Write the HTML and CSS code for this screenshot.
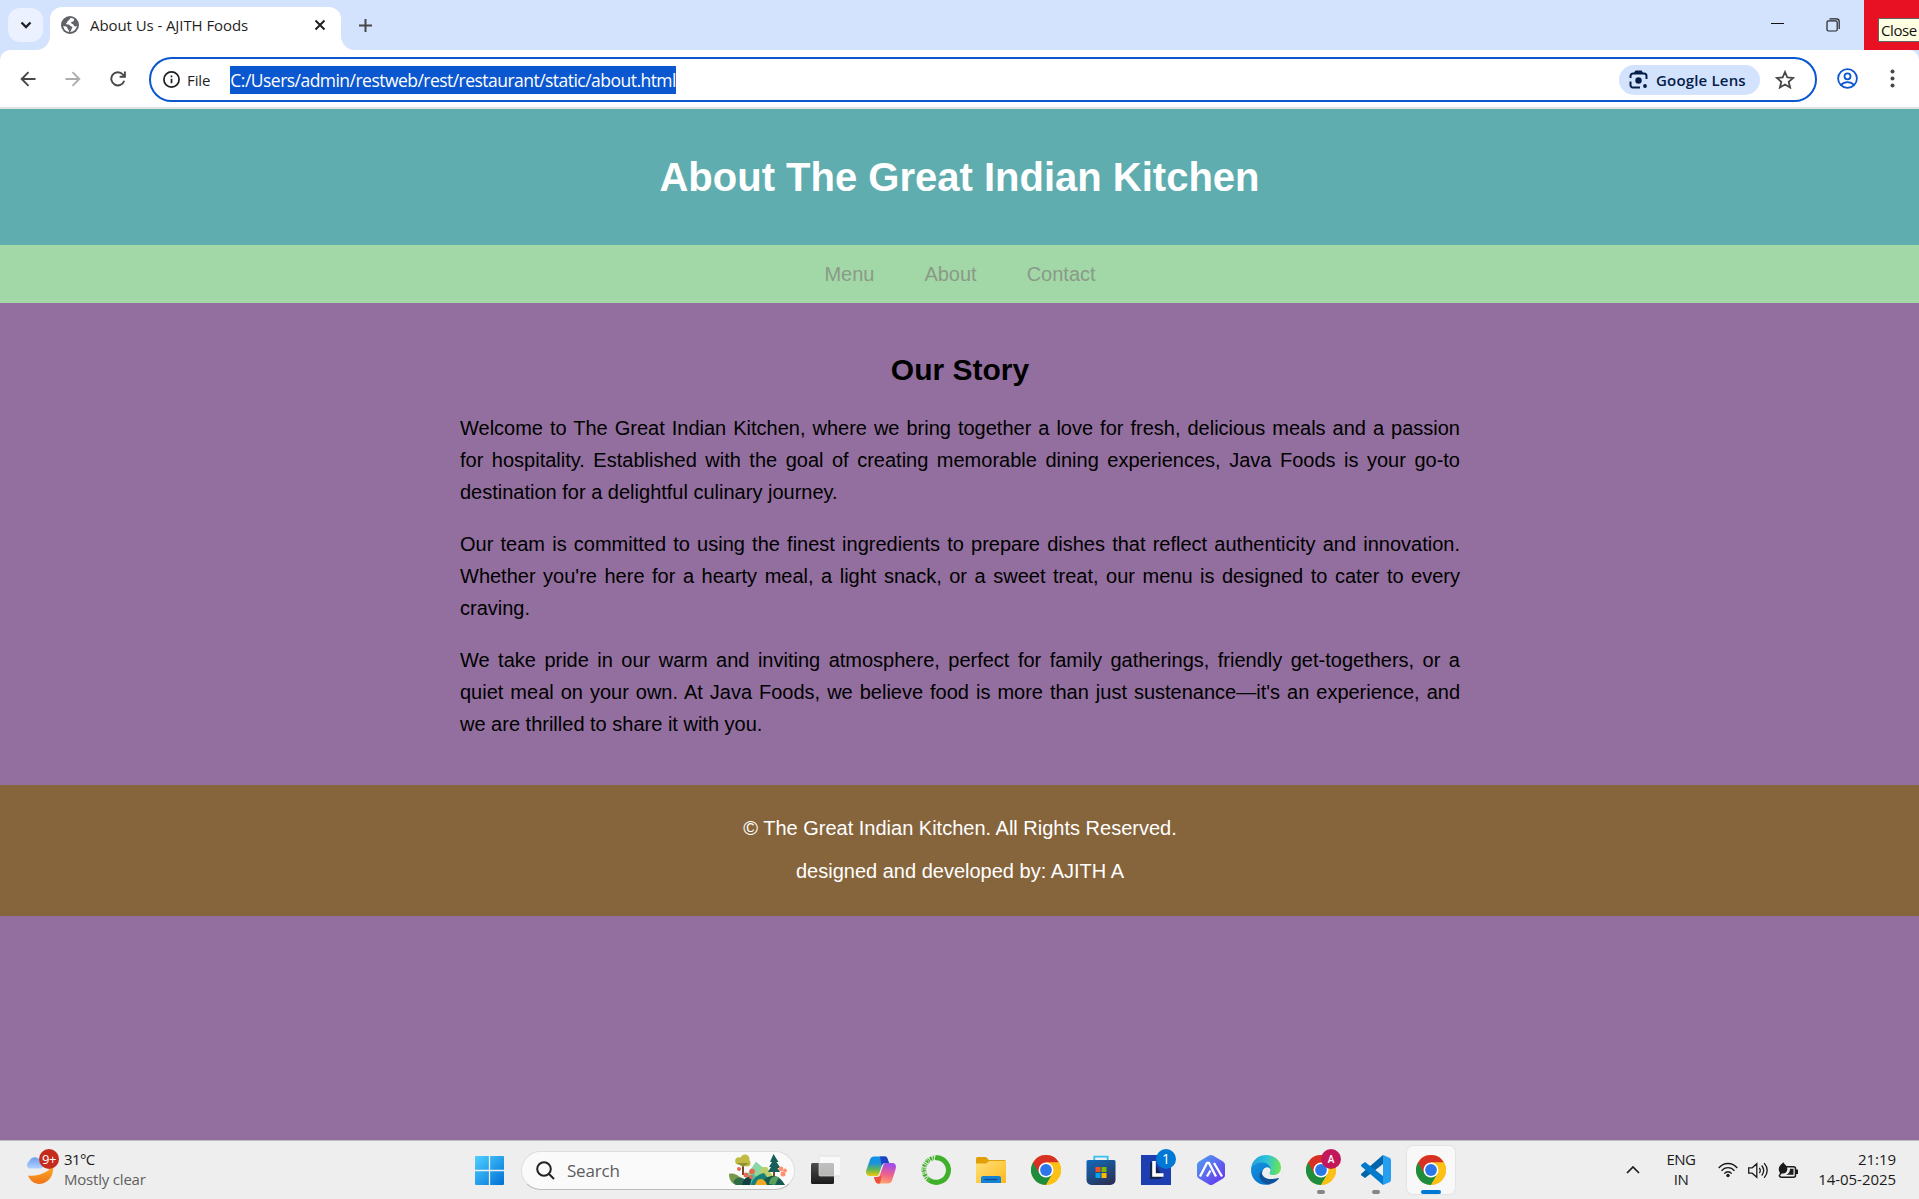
FILE: index.html
```html
<!DOCTYPE html>
<html lang="en">
<head>
<meta charset="utf-8">
<title>About Us - AJITH Foods</title>
<link rel="stylesheet" href="styles.css">
</head>
<body>
<svg class="defs" aria-hidden="true">
  <defs>
    <symbol id="chrome" viewBox="0 0 30 30">
      <circle cx="15" cy="15" r="15" fill="#fbc116"/>
      <path d="M15 15 2 7.5A15 15 0 0 0 15 30l6.5-11.3z" fill="#1e8e3e"/>
      <path d="M2 7.5A15 15 0 0 1 28 7.5H15l-6.500 11.250z" fill="#d93025"/>
      <path d="M15 7.500H28A15 15 0 0 1 15 30l6.500-11.250z" fill="#fbc116"/>
      <circle cx="15" cy="15" r="7.500" fill="#fff"/>
      <circle cx="15" cy="15" r="5.900" fill="#2b77ea"/>
    </symbol>
    <linearGradient id="win" x1="0" y1="0" x2="1" y2="1"><stop offset="0" stop-color="#4fd0ff"/><stop offset="1" stop-color="#0070d6"/></linearGradient>
    <linearGradient id="moon" x1="0" y1="0" x2="0" y2="1"><stop offset="0" stop-color="#ffb52c"/><stop offset="1" stop-color="#ef7417"/></linearGradient>
    <linearGradient id="cloud" x1="0" y1="0" x2="0" y2="1"><stop offset="0" stop-color="#6e9df0"/><stop offset="1" stop-color="#b3d2ff"/></linearGradient>
    <linearGradient id="dark" x1="0" y1="0" x2="0" y2="1"><stop offset="0" stop-color="#4d4d4b"/><stop offset="1" stop-color="#1b1b1b"/></linearGradient>
    <linearGradient id="cpa" x1="0" y1="0" x2="0" y2="1"><stop offset="0" stop-color="#128fe8"/><stop offset=".35" stop-color="#1c93d8"/><stop offset=".7" stop-color="#6cb84a"/><stop offset="1" stop-color="#f1c80c"/></linearGradient>
    <linearGradient id="cpb" x1=".4" y1="0" x2=".2" y2="1"><stop offset="0" stop-color="#a04ee8"/><stop offset=".5" stop-color="#f0608c"/><stop offset="1" stop-color="#ffab68"/></linearGradient>
    <linearGradient id="folder" x1="0" y1="0" x2="1" y2="1"><stop offset="0" stop-color="#ffe07a"/><stop offset="1" stop-color="#fcb91c"/></linearGradient>
    <linearGradient id="store" x1="0" y1="0" x2=".6" y2="1"><stop offset="0" stop-color="#0f6cbd"/><stop offset="1" stop-color="#29335c"/></linearGradient>
    <linearGradient id="hex" x1="0" y1="0" x2="1" y2="1"><stop offset="0" stop-color="#4ea3ee"/><stop offset="1" stop-color="#6a2cf0"/></linearGradient>
    <linearGradient id="edgetop" x1="0" y1=".3" x2="1" y2=".4"><stop offset="0" stop-color="#249fd8"/><stop offset=".5" stop-color="#2dc1dc"/><stop offset="1" stop-color="#6be552"/></linearGradient>
    <linearGradient id="edgemid" x1="0" y1="0" x2=".6" y2="1"><stop offset="0" stop-color="#1593df"/><stop offset="1" stop-color="#0674cd"/></linearGradient>
  </defs>
</svg>

<header class="browser">
  <div class="tabstrip">
    <button class="tab-search" aria-label="Search tabs"><svg width="12" height="8" viewBox="0 0 12 8"><path d="M1.500 1.500 6 6l4.500-4.500" fill="none" stroke="#202124" stroke-width="2.300"/></svg></button>
    <div class="tab">
      <svg class="foot foot-left" width="14" height="14" viewBox="0 0 14 14"><path d="M14 0v14H0A14 14 0 0 0 14 0" fill="#fff"/></svg>
      <svg class="globe" width="18" height="18" viewBox="0 0 18 18"><circle cx="9" cy="9" r="9" fill="#5f6368"/><path d="M10 2c-1.500 0-1 1.800-2.500 2.400C6 5 6.800 6.500 5.200 7.200 4.600 8 6 8.600 7.500 8.500c1.700 0 1.200 1.800 3 2 1.500.2 1 1.400.2 2.300-.7.900-.6 2.600-1.700 3.200a7 7 0 0 0 6.900-6.200c-1.400 1-3 .7-3.300-.8-.3-1.300-2.300-.8-2.500-2.200-.1-1.300 1.700-.9 2.600-1.700.7-.7.500-1.700-.1-2.300C11.800 2.300 11 2 10 2zM2.200 9.800A7 7 0 0 0 8 15.900c.2-1-.1-2-.9-2.500-.8-.6-.3-1.600-1.200-2.400C5 10.200 3.600 10.600 2.200 9.800z" fill="#fff"/></svg>
      <span class="tab-title">About Us - AJITH Foods</span>
      <svg class="tab-close" width="12" height="12" viewBox="0 0 12 12"><path d="m1.500 1.500 9 9m0-9-9 9" stroke="#202124" stroke-width="2"/></svg>
      <svg class="foot foot-right" width="14" height="14" viewBox="0 0 14 14"><path d="M0 0v14h14A14 14 0 0 1 0 0" fill="#fff"/></svg>
    </div>
    <svg class="new-tab" width="13" height="13" viewBox="0 0 13 13"><path d="M6.500 0v13M0 6.500h13" stroke="#474747" stroke-width="2"/></svg>
    <div class="window-controls">
      <div class="control minimize"><svg width="13" height="13" viewBox="0 0 13 13"><path d="M0 6.500h13" stroke="#111" /></svg></div>
      <div class="control restore"><svg width="14" height="14" viewBox="0 0 14 14" fill="none" stroke="#222" stroke-width="1.200"><rect x="1" y="2.800" width="10.200" height="10.200" rx="1.500"/><path d="M3.500.800h7a2.700 2.700 0 0 1 2.700 2.700V11"/></svg></div>
      <div class="control close"><span class="tooltip">Close</span></div>
    </div>
  </div>
  <div class="toolbar">
    <svg class="nav-icon" width="16" height="16" viewBox="0 0 16 16" fill="none" stroke="#474747" stroke-width="1.900"><path d="M15.500 8H1.800M8.500 1.200 1.700 8l6.800 6.800"/></svg>
    <svg class="nav-icon" width="16" height="16" viewBox="0 0 16 16" fill="none" stroke="#adadad" stroke-width="1.900"><path d="M.5 8h13.700M7.500 1.200 14.300 8l-6.800 6.800"/></svg>
    <svg class="nav-icon" width="16" height="16" viewBox="0 0 16 16" fill="none" stroke="#474747" stroke-width="1.900"><path d="M14.200 9.800A6.600 6.600 0 1 1 12.900 3.500L14.500 5.500M14.900.500v5.300H9.600"/></svg>
    <div class="omnibox">
      <svg class="info" width="17" height="17" viewBox="0 0 17 17"><circle cx="8.500" cy="8.500" r="7.600" fill="none" stroke="#1f1f1f" stroke-width="1.700"/><path d="M8.500 7.700v4.600M8.500 4.500v1.800" stroke="#1f1f1f" stroke-width="1.700"/></svg>
      <span class="scheme">File</span>
      <span class="url">C:/Users/admin/restweb/rest/restaurant/static/about.html</span>
      <div class="lens">
        <svg width="19" height="19" viewBox="0 0 19 19" fill="none" stroke="#041e49" stroke-width="2"><path d="M1.500 8V6a2.500 2.500 0 0 1 2.500-2.500h11A2.500 2.500 0 0 1 17.500 6v3M1.500 11.500v3A2.500 2.500 0 0 0 4 17.500h7M5.500 3.500 7 1.500h5l1.500 2"/><circle cx="9.500" cy="10.500" r="3.200" fill="#041e49" stroke="none"/><circle cx="16" cy="16" r="1.900" fill="#041e49" stroke="none"/></svg>
        <span>Google Lens</span>
      </div>
      <svg class="star" width="20" height="19" viewBox="0 0 20 19"><path d="m10 2 2.300 5.400 5.900.5-4.500 3.900 1.400 5.700-5.100-3-5.100 3 1.400-5.700L1.800 7.900l5.900-.5z" fill="none" stroke="#474747" stroke-width="1.800"/></svg>
    </div>
    <svg class="profile" width="21" height="21" viewBox="0 0 21 21" fill="none" stroke="#0b57d0" stroke-width="1.800"><circle cx="10.500" cy="10.500" r="9.400"/><circle cx="10.500" cy="8.300" r="3"/><path d="M4 17c3.500-3.800 9.500-3.800 13 0"/></svg>
    <svg class="more" width="5" height="19" viewBox="0 0 5 19" fill="#474747"><circle cx="2.500" cy="2.500" r="2"/><circle cx="2.500" cy="9.500" r="2"/><circle cx="2.500" cy="16.500" r="2"/></svg>
  </div>
</header>

<div class="page">
  <div class="banner"><h1>About The Great Indian Kitchen</h1></div>
  <nav class="menu"><a>Menu</a><a>About</a><a>Contact</a></nav>
  <main class="story">
    <h2>Our Story</h2>
    <p>Welcome to The Great Indian Kitchen, where we bring together a love for fresh, delicious meals and a passion for hospitality. Established with the goal of creating memorable dining experiences, Java Foods is your go-to destination for a delightful culinary journey.</p>
    <p>Our team is committed to using the finest ingredients to prepare dishes that reflect authenticity and innovation. Whether you're here for a hearty meal, a light snack, or a sweet treat, our menu is designed to cater to every craving.</p>
    <p>We take pride in our warm and inviting atmosphere, perfect for family gatherings, friendly get-togethers, or a quiet meal on your own. At Java Foods, we believe food is more than just sustenance—it's an experience, and we are thrilled to share it with you.</p>
  </main>
  <footer class="credits">
    <p>© The Great Indian Kitchen. All Rights Reserved.</p>
    <p>designed and developed by: AJITH A</p>
  </footer>
</div>

<div class="taskbar">
  <div class="weather">
    <div class="weather-icon">
      <svg width="30" height="30" viewBox="0 0 30 30"><path d="M28 7C27 15 14 21 3 19.500c3 8 11 10.500 18 6.500s8-13 7-19z" fill="url(#moon)"/><path d="M4 12.500a4 4 0 0 1 0-7C6 .500 13-.500 15 5c5 1 5 7.500 0 7.500z" fill="url(#cloud)"/></svg>
      <span class="alert">9+</span>
    </div>
    <div class="weather-text"><span class="temp">31°C</span><span class="sky">Mostly clear</span></div>
  </div>
  <div class="app start"><svg width="29" height="29" viewBox="0 0 29 29" fill="url(#win)"><path d="M1 0h27a1 1 0 0 1 1 1v27a1 1 0 0 1-1 1H1a1 1 0 0 1-1-1V1a1 1 0 0 1 1-1z"/><path d="M14.500 0v29M0 14.500h29" stroke="#eee" stroke-width="1.300"/></svg></div>
  <div class="search">
    <svg width="19" height="19" viewBox="0 0 19 19" fill="none" stroke="#222" stroke-width="2"><circle cx="8" cy="8" r="6.800"/><path d="m13 13 5 5"/></svg>
    <span>Search</span>
    <svg class="scene" width="58" height="33" viewBox="0 0 58 33">
      <path d="M13 29 27 8l13 11 4 12H13z" fill="#4fc0a0"/><path d="M27 8 17 22l8-2 3 4 8-8z" fill="#8bd7a4"/>
      <path d="M33 13h5l12 18H26z" fill="#b9d06a"/><path d="M22 31c1-7 8-11 13-12l9 12z" fill="#168078"/>
      <path d="M0 20c7-2 13 4 16 11H7C2 29 0 25 0 20z" fill="#78994c"/><path d="M4 28c3-6 11-7 16 3H7z" fill="#306b48"/>
      <path d="M14 6v15" stroke="#73472b" stroke-width="2"/><g fill="#c1ba43"><circle cx="10" cy="7" r="3.800"/><circle cx="16" cy="5" r="4.500"/><circle cx="18" cy="9" r="3.500"/></g><path d="M8 9h12l-6 4z" fill="#93902f"/>
      <path d="M45 9v17" stroke="#724a31" stroke-width="2"/><path d="m44.500 0 5 8h-2l4 6h-3l2.500 4H39l3-5h-2l3-5h-2z" fill="#175d58"/>
      <path d="M32 31c2-7 8-9 12-9 6 0 9 4 12 9z" fill="#155a50"/><path d="M40 30c1-8 6-8 10-7l-4 8z" fill="#5aa15d"/><path d="M28 27c2-3 8-3 10 4H26z" fill="#f0a923"/><path d="M13 31c1-5 4-9 10-8l-2 8z" fill="#123f43"/>
      <g fill="#e9684b"><circle cx="17" cy="21" r="2.500"/><circle cx="23" cy="17.500" r="2.800"/><circle cx="22" cy="23" r="2"/><circle cx="10" cy="15" r="2"/></g><g fill="#ff9172"><circle cx="52" cy="15" r="2.400"/><circle cx="56" cy="16.500" r="2"/><circle cx="54" cy="20" r="2.500"/></g>
    </svg>
  </div>
  <div class="apps">
    <div class="app"><svg width="30" height="30" viewBox="0 0 30 30"><rect y="8" width="23" height="21" rx="1.500" fill="url(#dark)"/><rect x="8" y="1" width="22" height="20" rx="1" fill="#fff" fill-opacity=".65" stroke="#d8d8d8" stroke-opacity=".7"/></svg></div>
    <div class="app"><svg width="30" height="30" viewBox="0 0 30 30"><path d="M8 1.500h11c2 0 2.500 2.500 4 6.500h-4c-2 0-2.700 1-3.300 3L13 19c-.5 1.500-1.500 2-3 2H4c-4 0-4.500-3.500-3.500-6.500L4 4.500C4.800 2.500 6 1.500 8 1.500z" fill="url(#cpa)"/><path d="M14 1.500h5c2.500 0 2.500 2.500 4 6.500h-4c-2 0-2.700 1-3.300 3z" fill="#1b43c4"/><path d="M20 8h6.500c3.500 0 4 3.500 3 6.500L26 25.500c-.8 2-2 3-4 3H12c-2 0-3-2.500-4-6.500h3c2 0 2.700-1 3.300-3L17 11c.5-2 1.300-3 3-3z" fill="url(#cpb)"/><path d="m16 20-2 8.500h-2c-2 0-3-2.500-4-6.500h3c2 0 4-1 5-2z" fill="#ee5040"/></svg></div>
    <div class="app"><svg width="30" height="30" viewBox="0 0 30 30" fill="none" stroke="#3fb02a"><path d="M15 2.700A12.300 12.300 0 1 1 8 25" stroke-width="5"/><path d="M16 2.700A12.300 12.300 0 0 0 8 25" stroke-width="4.600" stroke-dasharray="2.200 .9 1.100 .7"/><path d="M15 1A14 14 0 0 0 6 25.500M14 5A10 10 0 0 0 7 22" stroke="#eee" stroke-width="1" stroke-dasharray="1.500 2"/></svg></div>
    <div class="app"><svg width="30" height="30" viewBox="0 0 30 30"><path d="M0 3.500A1.500 1.500 0 0 1 1.500 2H10l3 3h15.500A1.500 1.500 0 0 1 30 6.500V12H0z" fill="#dfa00c"/><path d="M0 8.500h10L13.500 6H30v22H0z" fill="url(#folder)"/><path d="M5 28v-5a2 2 0 0 1 2-2h16a2 2 0 0 1 2 2v5z" fill="#1682d4"/><path d="M8.500 24.500h13" stroke="#0a5194" stroke-width="1.300"/></svg></div>
    <div class="app"><svg width="30" height="30"><use href="#chrome"/></svg></div>
    <div class="app"><svg width="30" height="30" viewBox="0 0 30 30"><path d="M8.300 6V1.700h13.400V6" fill="none" stroke="#35c1f1" stroke-width="1.800"/><path d="M.5 6.500A1.500 1.500 0 0 1 2 5h26a1.500 1.500 0 0 1 1.500 1.500V25a5 5 0 0 1-5 5h-19a5 5 0 0 1-5-5z" fill="url(#store)"/><path d="M9.500 12h5v5h-5z" fill="#f25022"/><path d="M15.500 12h5v5h-5z" fill="#7fba00"/><path d="M9.500 18h5v5h-5z" fill="#00a4ef"/><path d="M15.500 18h5v5h-5z" fill="#ffb900"/></svg></div>
    <div class="app"><svg width="30" height="30" viewBox="0 0 30 30"><path d="M0 0h30v30H0z" fill="#1c3eb0"/><path d="m12 6-3 2v16h10l3-2z" fill="#10264d"/><path d="M13 6v14h9.500" fill="none" stroke="#fff" stroke-width="3.600"/></svg><span class="badge count">1</span></div>
    <div class="app"><svg width="30" height="30" viewBox="0 0 30 30"><path d="M13 .6q2-1 4 0l10 5.800q2 1.100 2 3.400v10.400q0 2.300-2 3.400l-10 5.800q-2 1-4 0L3 23.600q-2-1.100-2-3.400V9.800q0-2.300 2-3.400z" fill="url(#hex)"/><path d="M4 21.500 11 8h2l7 13.500M11 21.500l3.500-6M18 8l8 13.500" fill="none" stroke="#fff" stroke-width="2.300"/></svg></div>
    <div class="app"><svg width="30" height="30" viewBox="0 0 30 30"><path d="M0 15C0 6 7 0 15 0c9 0 15 6 15 12.500 0 5-3.500 7.500-7.500 7.500-4 0-4.500-1.500-4-2.500 2.500-4-.5-8.500-7-8.500C6 9 2 12 0 15z" fill="url(#edgetop)"/><path d="M0 15c1-5 6-7.500 11-7.500s9 3.500 8.500 7C18 12 14 12 12 15c-3 6 1.500 13 8 14C9 32.500 0 25 0 15z" fill="url(#edgemid)"/><path d="M10.500 15.500c-.5 5.500 5 11 16.500 7.500 1-.3 1 .4.500 1-5 6-12 6-14.500 4-5-3-6-8.500-2.500-12.500z" fill="#0f539d"/><path d="M12.500 14.500C15 11 19 12 19 15c0 2-1 2.500-.5 3.500-2.500 1-5-1-6-4z" fill="#eee"/></svg></div>
    <div class="app"><svg width="30" height="30"><use href="#chrome"/></svg><span class="badge user">A</span><i class="running"></i></div>
    <div class="app"><svg width="30" height="30" viewBox="0 0 30 30"><path d="M22 0v9L4 23 .500 20.500q-1-1 0-2z" fill="#0065a9"/><path d="M22 30v-9L4 7 .500 9.500q-1 1 0 2z" fill="#007acc"/><path d="m22 0 6.500 2.800q1.500.7 1.500 2.200v20q0 1.500-1.500 2.200L22 30z" fill="#279ff0"/></svg><i class="running"></i></div>
    <div class="app active"><svg width="30" height="30"><use href="#chrome"/></svg><i class="running"></i></div>
  </div>
  <div class="tray">
    <svg class="chevron" width="14" height="8" viewBox="0 0 14 8"><path d="m1 7 6-6 6 6" fill="none" stroke="#1b1b1b" stroke-width="1.700"/></svg>
    <div class="language"><span>ENG</span><span>IN</span></div>
    <div class="status">
      <svg width="20" height="16" viewBox="0 0 20 16" fill="none" stroke="#1b1b1b" stroke-width="1.300"><path d="M.7 6c5-6 13.600-6 18.600 0M3.500 8.800c3.500-4.200 9.500-4.200 13 0M6.300 11.600c2-2.500 5.400-2.500 7.400 0"/><circle cx="10" cy="13.500" r="1.700" fill="#1b1b1b" stroke="none"/></svg>
      <svg width="20" height="17" viewBox="0 0 20 17" fill="none" stroke="#1b1b1b" stroke-width="1.300"><path d="M.7 5.800h3.500L8.800 1.700v13.600l-4.600-4.100H.7zM11.300 5.800q2 2.700 0 5.400M13.700 3.500q4 5 0 10M16.200 1.200q6 7.300 0 14.600"/></svg>
      <svg width="20" height="17" viewBox="0 0 20 17"><path d="M8 4.700h7.500a2 2 0 0 1 2 2v6.500a2 2 0 0 1-2 2H3.500a2 2 0 0 1-2-2" fill="none" stroke="#1b1b1b" stroke-width="1.500"/><path d="M18 7.500h2v4.500h-2zM8 12.800c3-1 4-3 4-6h3.500v6z" fill="#1b1b1b"/><path d="M5.700.300C6 3 9.500 3 9.300 7c0 3.500-3 5-5.500 4.500L1 14.500l-.5-.5 1.500-3C-.5 7 .5 4 5.700.300z" fill="#1b1b1b"/></svg>
    </div>
    <div class="clock"><span>21:19</span><span>14-05-2025</span></div>
  </div>
</div>
</body>
</html>
```

FILE: styles.css
```css
* { box-sizing: border-box; }
body {
  margin: 0;
  height: 1199px;
  overflow: hidden;
  display: flex;
  flex-direction: column;
  font-family: "Open Sans", "Noto Sans", sans-serif;
  background: #926f9e;
}
svg { display: block; flex: none; }
span { white-space: nowrap; }
.defs { position: absolute; width: 0; height: 0; }

/* Browser window */
.browser { flex: none; height: 109px; background: #d3e2fd; }
.tabstrip { height: 50px; display: flex; align-items: center; }
.tab-search {
  width: 35px; height: 34px; margin-left: 8px; padding: 0;
  border: 0; border-radius: 12px; background: #ebf1fe;
  display: flex; align-items: center; justify-content: center;
}
.tab {
  position: relative; align-self: flex-end;
  width: 291px; height: 43px; margin-left: 7px; padding: 0 15px 7px 11px;
  display: flex; align-items: center;
  background: #fff; border-radius: 12px 12px 0 0;
}
.foot { position: absolute; bottom: 0; }
.foot-left { left: -14px; }
.foot-right { right: -14px; }
.tab-title { margin-left: 11px; font-size: 15px; letter-spacing: -.08px; color: #1f1f1f; }
.tab-close { margin-left: auto; }
.new-tab { margin-left: 18px; }
.window-controls { margin-left: auto; align-self: stretch; display: flex; }
.control { width: 55px; display: flex; align-items: center; justify-content: center; }
.minimize { padding: 0 8px 3px 0; }
.restore { padding-right: 7px; }
.close { background: #e81123; justify-content: flex-start; padding-left: 14px; overflow: hidden; }
.tooltip {
  flex: none; width: 52px; height: 24px; margin-top: 10px; padding-left: 2px;
  border: 1px solid #646464; background: #ffffe1;
  font-size: 15px; line-height: 23px; letter-spacing: -.4px; color: #111;
}
.toolbar {
  height: 59px; display: flex; align-items: center;
  padding: 0 24px 0 20px; background: #fff;
  border-bottom: 2px solid #dfe3e2; border-radius: 10px 10px 0 0;
}
.nav-icon { margin-right: 29px; }
.nav-icon:nth-child(3) { margin-right: 23px; }
.omnibox {
  width: 1668px; height: 45px; margin-top: 2px; padding: 0 20px 0 12px;
  display: flex; align-items: center;
  border: 2.500px solid #0b57d0; border-radius: 23px;
}
.scheme { margin-left: 7px; font-size: 15px; font-weight: 500; letter-spacing: -.1px; color: #1f1f1f; }
.url {
  width: 446px; height: 28px; margin-left: 20px;
  background: #0b57d0; color: #fff; font-size: 17.500px; line-height: 29px; letter-spacing: -.53px;
}
.lens {
  width: 141px; height: 30px; margin-left: auto; margin-right: 15px; padding-left: 10px;
  display: flex; align-items: center; gap: 8px;
  background: #d3e2fd; border-radius: 15px;
  font-size: 15px; font-weight: 600; letter-spacing: .18px; color: #041e49;
}
.profile { margin-left: 20px; }
.more { margin-left: auto; }

/* Restaurant page */
.page { flex: 1; min-height: 0; font: 20px/32px "Liberation Sans", Arial, sans-serif; color: #000; }
.banner { height: 136px; display: flex; align-items: center; justify-content: center; background: #5fadaf; color: #fff; }
.banner h1 { margin: 0; font-size: 40px; line-height: 64px; }
.menu { height: 58px; padding-left: 1px; display: flex; align-items: center; justify-content: center; gap: 50px; background: #a2d8a7; color: #8a9a87; }
.story { width: 1000px; height: 482px; margin: 0 auto; padding-top: 43px; transform: translateX(.5px); }
.story h2 { margin: 0 0 18px; font-size: 30px; line-height: 48px; text-align: center; }
.story p { margin: 0 0 20px; text-align: justify; }
.credits { height: 131px; padding: 27px 0 0 1px; background: #87653c; color: #fff; text-align: center; }
.credits p { margin: 0 0 11px; }

/* Windows taskbar */
.taskbar { flex: none; height: 59px; display: flex; align-items: center; background: #eee; border-top: 1px solid #bdbdbd; }
.weather { width: 462px; padding-left: 25px; display: flex; gap: 9px; }
.weather-icon { position: relative; width: 30px; padding-top: 5px; }
.alert {
  position: absolute; left: 14px; top: -2px; width: 20px; height: 20px;
  border-radius: 50%; background: #c42b1c; color: #fff;
  font-size: 13px; line-height: 20px; text-align: center; letter-spacing: -.5px;
}
.weather-text { margin-top: -2px; display: flex; flex-direction: column; font-size: 15px; line-height: 20px; }
.temp { letter-spacing: -.6px; color: #1b1b1b; }
.sky { color: #606060; letter-spacing: -.2px; }
.app { position: relative; width: 55px; height: 48px; display: flex; align-items: center; justify-content: center; }
.search {
  width: 274px; height: 39px; margin: 1px 3px 0 4px; padding: 0 7px 0 14px;
  display: flex; align-items: center; background: #fafafa;
  border: 1px solid #dedede; border-bottom-color: #bcbcbc; border-radius: 20px;
}
.search span { margin-left: 12px; font-size: 17px; letter-spacing: -.2px; color: #5c5c5c; }
.scene { margin-left: auto; }
.apps { display: flex; }
.badge {
  position: absolute; right: 7px; top: 3px; width: 20px; height: 20px;
  border-radius: 50%; color: #fff; text-align: center; line-height: 20px;
}
.count { background: #0078d4; font-size: 14px; }
.user { background: #c2185b; font-size: 10px; font-weight: 600; }
.running { position: absolute; bottom: 0; width: 8px; height: 4px; border-radius: 2px; background: #858585; }
.active { width: 48px; margin-left: 4px; background: #f8f8f8; border-radius: 6px; box-shadow: 0 0 1px 1px #e3e3e3; }
.active .running { width: 20px; background: #0078d4; }
.tray { margin-left: auto; padding-right: 23px; display: flex; align-items: center; font-size: 15px; line-height: 20px; color: #1b1b1b; }
.language { width: 40px; margin: -2px 0 0 21px; display: flex; flex-direction: column; align-items: center; letter-spacing: -.5px; }
.status { width: 80px; margin-left: 17px; display: flex; gap: 10px; align-items: center; }
.clock { width: 78px; margin: -2px 0 0 20px; display: flex; flex-direction: column; align-items: flex-end; letter-spacing: -.05px; }
```
